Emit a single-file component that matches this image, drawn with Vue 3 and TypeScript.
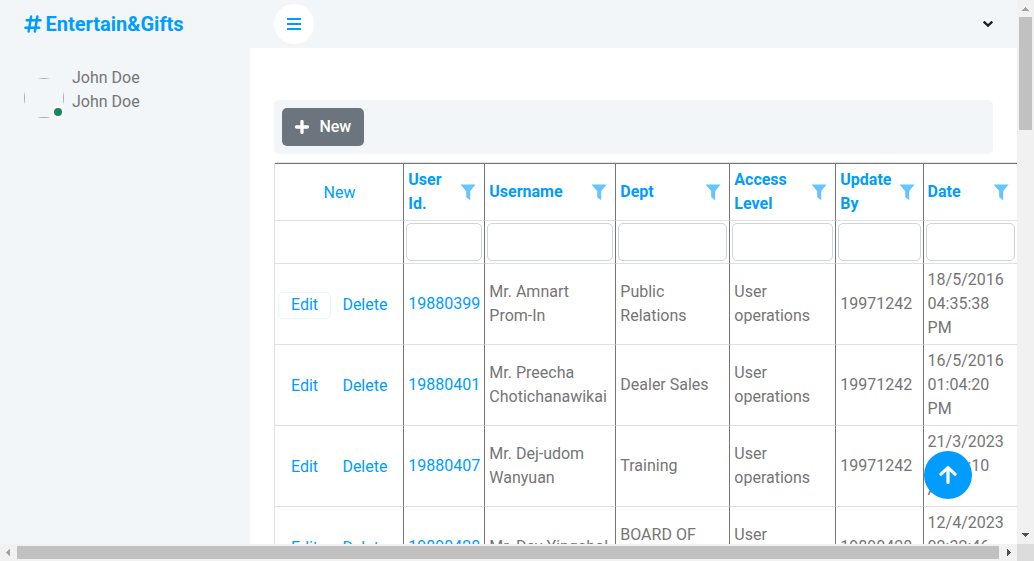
<script setup lang="ts">
interface Column {
  title: string[]
}

interface Row {
  id: string
  name: string[]
  dept: string[]
  level: string[]
  by: string
  date: string[]
}

const columns: Column[] = [
  { title: ['User', 'Id.'] },
  { title: ['Username'] },
  { title: ['Dept'] },
  { title: ['Access', 'Level'] },
  { title: ['Update', 'By'] },
  { title: ['Date'] },
]

const rows: Row[] = [
  { id: '19880399', name: ['Mr. Amnart', 'Prom-In'], dept: ['Public', 'Relations'], level: ['User', 'operations'], by: '19971242', date: ['18/5/2016', '04:35:38', 'PM'] },
  { id: '19880401', name: ['Mr. Preecha', 'Chotichanawikai'], dept: ['Dealer Sales'], level: ['User', 'operations'], by: '19971242', date: ['16/5/2016', '01:04:20', 'PM'] },
  { id: '19880407', name: ['Mr. Dej-udom', 'Wanyuan'], dept: ['Training'], level: ['User', 'operations'], by: '19971242', date: ['21/3/2023', '09:22:10', 'AM'] },
  { id: '19890428', name: ['Mr. Dev Yingchol'], dept: ['BOARD OF', 'DIRECTOR'], level: ['User', 'operations'], by: '19890428', date: ['12/4/2023', '02:32:46', 'PM'] },
]

const cells = (r: Row): string[][] => [[r.id], r.name, r.dept, r.level, [r.by], r.date]
</script>

<template>
  <div class="window">
    <div class="viewport">
      <aside class="sidebar">
        <div class="brand">
          <svg class="hash" viewBox="0 0 448 512"><path d="M181.3 32.4c17.4 2.9 29.2 19.4 26.3 36.8L197.8 128h95.100l11.500-69.300c2.900-17.400 19.400-29.200 36.800-26.300s29.200 19.400 26.300 36.800L357.800 128H416c17.700 0 32 14.300 32 32s-14.300 32-32 32H347.100L325.800 320H384c17.700 0 32 14.300 32 32s-14.300 32-32 32H315.100l-11.500 69.300c-2.900 17.400-19.400 29.200-36.800 26.300s-29.200-19.400-26.300-36.800l9.800-58.700H155.100l-11.500 69.300c-2.900 17.400-19.400 29.200-36.800 26.300s-29.200-19.400-26.300-36.800L90.200 384H32c-17.700 0-32-14.300-32-32s14.300-32 32-32h68.900l21.300-128H64c-17.700 0-32-14.300-32-32s14.300-32 32-32h68.900l11.500-69.300c2.900-17.400 19.400-29.200 36.800-26.300zM187.100 192L165.800 320h95.100l21.300-128H187.100z" /></svg>
          <span>Entertain&amp;Gifts</span>
        </div>
        <div class="user">
          <div class="avatar">
            <div class="photo"><div class="frame"></div></div>
            <i class="online"></i>
          </div>
          <div class="names">
            <span>John Doe</span>
            <span>John Doe</span>
          </div>
        </div>
      </aside>

      <main class="content">
        <nav class="navbar">
          <button class="toggler" type="button">
            <svg width="14" height="16" viewBox="0 0 14 16"><path d="M0 3h14M0 8h14M0 13h14" stroke="#009cff" stroke-width="2" /></svg>
          </button>
          <svg class="chevron" width="12" height="8" viewBox="0 0 12 8"><path d="M1.700 1.700L6 5.600l4.300-3.900" fill="none" stroke="#191c24" stroke-width="2.300" /></svg>
        </nav>

        <section class="toolbar">
          <button class="new-button" type="button">
            <svg width="14" height="14" viewBox="0 0 14 14"><path d="M7 1.500v11M1.500 7h11" stroke="#fff" stroke-width="3.300" stroke-linecap="round" /></svg>
            <span>New</span>
          </button>
        </section>

        <section class="grid">
          <div class="row head">
            <div class="cell center"><span class="link">New</span></div>
            <div v-for="(c, i) in columns" :key="i" class="cell">
              <div class="lines title"><span v-for="t in c.title" :key="t">{{ t }}</span></div>
              <svg class="funnel" width="16" height="17" viewBox="0 0 16 17"><path d="M.5 .5h15L10.200 7.200v9L6.200 13.200V7.200z" fill="#66c4ff" /></svg>
            </div>
          </div>
          <div class="row filters">
            <div class="cell"></div>
            <div v-for="(c, i) in columns" :key="i" class="cell"><input type="text" /></div>
          </div>
          <div v-for="(r, n) in rows" :key="r.id" class="row body">
            <div class="cell actions">
              <button type="button" :class="{ focused: n === 0 }">Edit</button>
              <button type="button">Delete</button>
            </div>
            <div v-for="(lines, i) in cells(r)" :key="i" class="cell" :class="{ link: i === 0 }">
              <div class="lines"><span v-for="t in lines" :key="t">{{ t }}</span></div>
            </div>
          </div>
        </section>
      </main>

      <button class="to-top" type="button">
        <svg width="18" height="20" viewBox="0 0 18 20"><path d="M9 17.500V3M2 9.200L9 2.700l7 6.500" fill="none" stroke="#fff" stroke-width="3.200" stroke-linecap="round" stroke-linejoin="round" /></svg>
      </button>
    </div>

    <div class="vbar">
      <svg width="17" height="17" viewBox="0 0 17 17" shape-rendering="crispEdges"><path d="M5 11h7v-1h-1v-1h-1v-1h-1v-1h-1v1h-1v1h-1v1h-1z" fill="#a3a3a3" /></svg>
      <div class="thumb"></div>
      <svg class="end" width="17" height="17" viewBox="0 0 17 17" shape-rendering="crispEdges"><path d="M5 6h7v1h-1v1h-1v1h-1v1h-1v-1h-1v-1h-1v-1h-1z" fill="#505050" /></svg>
    </div>
    <div class="hbar">
      <svg width="17" height="17" viewBox="0 0 17 17" shape-rendering="crispEdges"><path d="M10 5v7h-1v-1h-1v-1h-1v-1h-1v-1h1v-1h1v-1h1v-1z" fill="#a3a3a3" /></svg>
      <div class="thumb"></div>
      <svg class="end" width="17" height="17" viewBox="0 0 17 17" shape-rendering="crispEdges"><path d="M7 5v7h1v-1h1v-1h1v-1h1v-1h-1v-1h-1v-1h-1v-1z" fill="#505050" /></svg>
    </div>
    <div class="corner"></div>
  </div>
</template>

<style>
body {
  overflow: hidden;
}
</style>

<style scoped>
* {
  box-sizing: border-box;
}

.window {
  display: grid;
  grid-template: 544px 17px / 1017px 17px;
  width: 1034px;
  height: 561px;
  overflow: hidden;
  font: 400 16px/24px Roboto, "Noto Sans", sans-serif;
  color: #757575;
  background: #fff;
}

button {
  font: inherit;
  padding: 0;
  border: 0;
}

svg {
  display: block;
  flex: none;
}

.viewport {
  position: relative;
  display: flex;
  overflow: hidden;
}

.sidebar {
  flex: none;
  width: 250px;
  background: #f3f6f9;
}

.brand {
  display: flex;
  align-items: center;
  height: 48px;
  padding-left: 24px;
  gap: 3.500px;
  font-size: 20px;
  font-weight: 700;
  color: #009cff;
}

.hash {
  width: 18px;
  height: 20px;
  fill: #009cff;
}

.user {
  display: flex;
  align-items: center;
  height: 48px;
  margin: 18px 0 0 24px;
}

.avatar {
  position: relative;
  width: 40px;
  height: 40px;
  margin-top: 16px;
}

.photo {
  width: 40px;
  height: 40px;
  overflow: hidden;
  border-radius: 50%;
}

.frame {
  width: 40px;
  height: 40px;
  border: 1px solid #a8a8a8;
}

.online {
  position: absolute;
  right: 0;
  bottom: 0;
  width: 12px;
  height: 12px;
  border: 2px solid #fff;
  border-radius: 50%;
  background: #198754;
}

.names {
  display: flex;
  flex-direction: column;
  margin-left: 8px;
}

.content {
  flex: none;
  width: 767px;
  height: 544px;
  overflow: hidden;
}

.navbar {
  display: flex;
  align-items: center;
  justify-content: space-between;
  height: 48px;
  padding: 0 23px 0 24px;
  background: #f3f6f9;
}

.toggler {
  display: flex;
  align-items: center;
  justify-content: center;
  width: 40px;
  height: 40px;
  border-radius: 50%;
  background: #fff;
}

.toolbar {
  width: 719px;
  height: 54px;
  margin: 52px 0 0 24px;
  padding: 8px;
  border-radius: 5px;
  background: #f3f6f9;
}

.new-button {
  display: flex;
  align-items: center;
  width: 82px;
  height: 38px;
  padding-left: 13px;
  gap: 10.400px;
  border-radius: 5px;
  font-weight: 500;
  color: #fff;
  background: #6c757d;
}

.grid {
  width: 760px;
  margin: 8px 0 0 24px;
  border-top: 1px solid #dee2e6;
  border-left: 1px solid #dee2e6;
  border-top-left-radius: 3px;
}

.row {
  display: grid;
  grid-template-columns: 129px 81px 131px 114px 106px 88px 93px;
  height: 81px;
}

.row.head {
  height: 58px;
  border-top: 1px solid #757575;
}

.row.filters {
  height: 43px;
}

.cell {
  display: flex;
  align-items: center;
  min-width: 0;
  padding-left: 4.300px;
  border-right: 1px solid #757575;
  border-bottom: 1px solid #dee2e6;
  white-space: nowrap;
}

.cell:last-child {
  padding-left: 3.600px;
  border-right: 0;
}

.cell.center {
  justify-content: center;
  padding: 2px 0 0 1px;
}

.lines {
  display: flex;
  flex-direction: column;
}

.title {
  font-weight: 700;
  color: #009cff;
}

.link {
  color: #009cff;
}

.funnel {
  margin: 0 8.400px 0 auto;
}

.filters .cell,
.filters .cell:last-child {
  padding: 0 2px;
}

.filters input {
  width: 100%;
  height: 38px;
  border: 1px solid #ced4da;
  border-radius: 5px;
  background: #fff;
}

.actions {
  padding: 2px 0 0 3px;
}

.actions button {
  height: 27px;
  padding: 0 11.600px 0 12px;
  border: 1px solid transparent;
  border-radius: 5px;
  line-height: 24px;
  color: #009cff;
  background: none;
}

.actions button + button {
  padding-left: 10.700px;
}

.actions button.focused {
  border-color: #e5f5ff;
}

.to-top {
  position: absolute;
  right: 45px;
  bottom: 45px;
  display: flex;
  align-items: center;
  justify-content: center;
  width: 48px;
  height: 48px;
  border-radius: 50%;
  background: #009cff;
}

.vbar,
.hbar {
  display: flex;
  background: #f1f1f1;
}

.vbar {
  flex-direction: column;
}

.vbar .thumb {
  width: 13px;
  height: 113px;
  margin-left: 2px;
  background: #c1c1c1;
}

.vbar .end {
  margin-top: auto;
}

.hbar .thumb {
  width: 982px;
  height: 13px;
  margin-top: 2px;
  background: #c1c1c1;
}

.hbar .end {
  margin-left: auto;
}

.corner {
  background: #dcdcdc;
}
</style>
